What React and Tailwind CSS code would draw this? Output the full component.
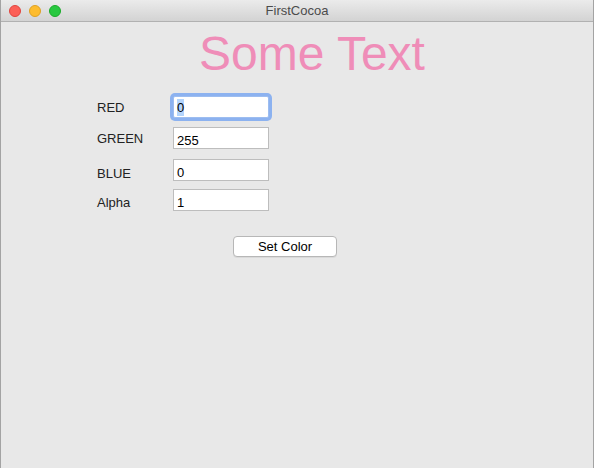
import { useState } from "react";

const font = { fontFamily: '"Liberation Sans", Arial, Helvetica, sans-serif' };

function TrafficLights() {
  return (
    <div className="flex items-center gap-[8px] pl-[8px]">
      <span className="w-[12px] h-[12px] rounded-full bg-[#fc5f57] border border-[#e0443e]" />
      <span className="w-[12px] h-[12px] rounded-full bg-[#fdbc2e] border border-[#dea123]" />
      <span className="w-[12px] h-[12px] rounded-full bg-[#28c840] border border-[#1aab29]" />
    </div>
  );
}

function Field({ value, focused, onChange }) {
  if (focused) {
    // focused field with the text selected
    return (
      <div className="w-[96px] h-[22px] bg-white border border-[#9dbdf0] ring-[3px] ring-[#8cb2f0] rounded-[2px] pl-[3px] pt-[2px] text-[13px] leading-[16px] text-black">
        <span className="inline-block bg-[#b3d4fc] leading-[17px]">{value}</span>
      </div>
    );
  }
  return (
    <input
      value={value}
      onChange={onChange}
      className="w-[96px] h-[22px] bg-white border border-[#bdbdbd] pl-[3px] pt-[4px] pb-0 text-[13px] leading-[16px] text-black outline-none"
      style={font}
    />
  );
}

export default function App() {
  const [values, setValues] = useState({ red: "0", green: "255", blue: "0", alpha: "1" });

  const rows = [
    { key: "red", label: "RED", mt: "mt-[74px]", lt: "pt-[4px]" },
    { key: "green", label: "GREEN", mt: "mt-[9px]", lt: "pt-[4px]" },
    { key: "blue", label: "BLUE", mt: "mt-[10px]", lt: "pt-[7px]" },
    { key: "alpha", label: "Alpha", mt: "mt-[8px]", lt: "pt-[6px]" },
  ];

  return (
    <div
      className="w-[594px] h-[468px] bg-[#e8e8e8] flex flex-col border-x border-[#a3a3a3] overflow-hidden"
      style={font}
    >
      {/* window title bar */}
      <div className="relative h-[22px] shrink-0 flex items-center bg-gradient-to-b from-[#ebebeb] to-[#d3d3d3] border-b border-[#b1b1b1]">
        <TrafficLights />
        <div className="absolute inset-0 flex items-center justify-center text-[13px] text-[#4b4b4b]">
          FirstCocoa
        </div>
      </div>

      <div className="relative flex-1">
        <div className="absolute left-0 right-0 top-[8px] flex justify-center pl-[30px]">
          <h1 className="text-[48px] leading-[48px] text-[#ef8db8]">Some Text</h1>
        </div>

        <div className="flex flex-col pl-[96px]">
          {rows.map((r) => (
            <div key={r.key} className={`flex items-start ${r.mt}`}>
              <div className={`w-[76px] text-[13px] leading-[15px] text-[#222] ${r.lt}`}>{r.label}</div>
              <Field
                value={values[r.key]}
                focused={r.key === "red"}
                onChange={(e) => setValues({ ...values, [r.key]: e.target.value })}
              />
            </div>
          ))}

          <div className="mt-[23px] pl-[136px]">
            <button className="w-[104px] h-[21px] bg-white border border-[#b7b7b7] rounded-[4px] shadow-[0_1px_0_rgba(0,0,0,0.06)] text-[13px] leading-[19px] text-black">
              Set Color
            </button>
          </div>
        </div>
      </div>
    </div>
  );
}
